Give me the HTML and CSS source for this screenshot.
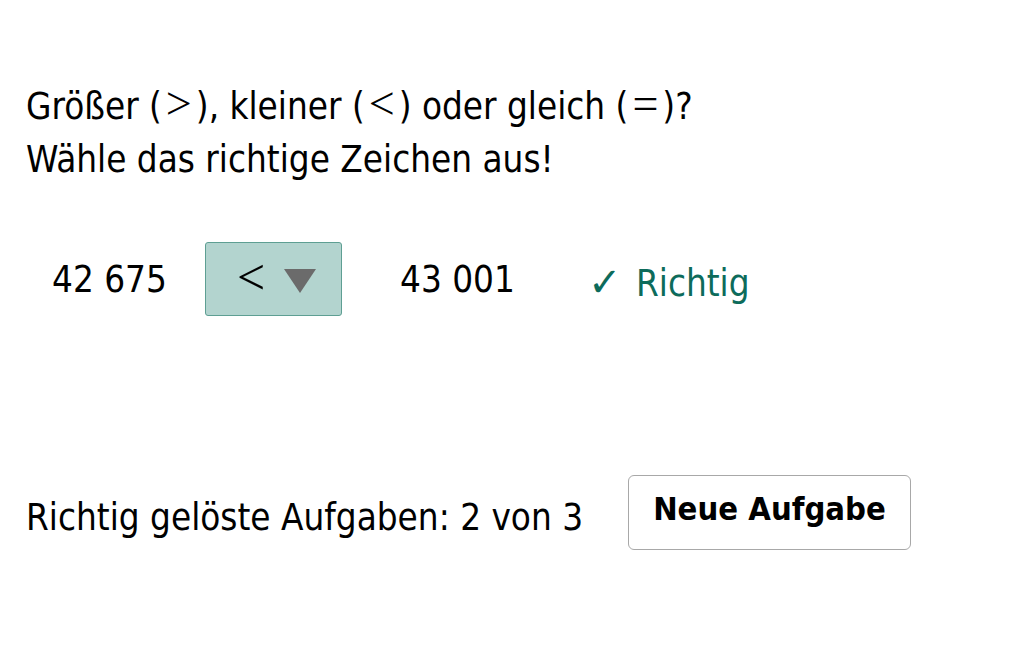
FILE: index.html
```html
<!DOCTYPE html>
<html lang="de">
<head>
<meta charset="utf-8">
<link rel="stylesheet" href="styles.css">
</head>
<body>
<main class="task">
  <p class="question">Größer (<span class="math">&gt;</span>), kleiner (<span class="math">&lt;</span>) oder gleich (<span class="math">=</span>)?<br>Wähle das richtige Zeichen aus!</p>
  <div class="compare">
    <span class="num num-left">42 675</span>
    <div class="select">
      <span class="sign">&lt;</span>
      <svg class="caret" width="32" height="24" viewBox="0 0 32 24"><polygon points="0,0 32,0 16,24" fill="#6b6b6b"/></svg>
    </div>
    <span class="num num-right">43 001</span>
    <span class="result"><span class="check">✓</span> Richtig</span>
  </div>
  <div class="footer">
    <span class="score">Richtig gelöste Aufgaben: 2 von 3</span>
    <button class="new">Neue Aufgabe</button>
  </div>
</main>
</body>
</html>
```
FILE: styles.css
```css
html, body {
  margin: 0;
  padding: 0;
  background: #fff;
}
body {
  font-family: "DejaVu Sans Condensed", "Liberation Sans", sans-serif;
  color: #000;
  font-size: 36.5px;
}
.task {
  padding: 80px 0 0 26px;
}
.question {
  margin: 0;
  line-height: 53px;
}
.math {
  font-family: "Liberation Serif", serif;
  font-size: 46px;
  line-height: 0;
  padding: 0 4px;
}
.compare {
  display: flex;
  align-items: center;
  margin-top: 56px;
  height: 74px;
}
.num-left {
  margin-left: 26px;
  width: 153px;
}
.select {
  box-sizing: border-box;
  width: 137px;
  height: 74px;
  background: #b3d4cf;
  border: 1.5px solid #5e9f93;
  border-radius: 3px;
  display: flex;
  align-items: center;
  padding-left: 31px;
  gap: 19px;
}
.sign {
  font-family: "Liberation Serif", serif;
  font-size: 50px;
  margin-top: -4px;
}
.caret {
  margin-top: 4px;
}
.num-right {
  margin-left: 58px;
  width: 188px;
}
.result {
  color: #0d6b5b;
  margin-top: 8px;
}
.check {
  font-family: "DejaVu Sans", sans-serif;
  font-size: 40px;
  line-height: 0;
  margin-right: 4px;
}
.footer {
  display: flex;
  align-items: center;
  margin-top: 159px;
}
.score {
  width: 602px;
  margin-top: 10px;
}
.new {
  box-sizing: border-box;
  width: 283px;
  height: 75px;
  background: #fff;
  border: 1.5px solid #a8a8a8;
  border-radius: 6px;
  font-family: inherit;
  font-size: 32.5px;
  font-weight: bold;
  color: #000;
  padding: 0 0 7px;
}
```
